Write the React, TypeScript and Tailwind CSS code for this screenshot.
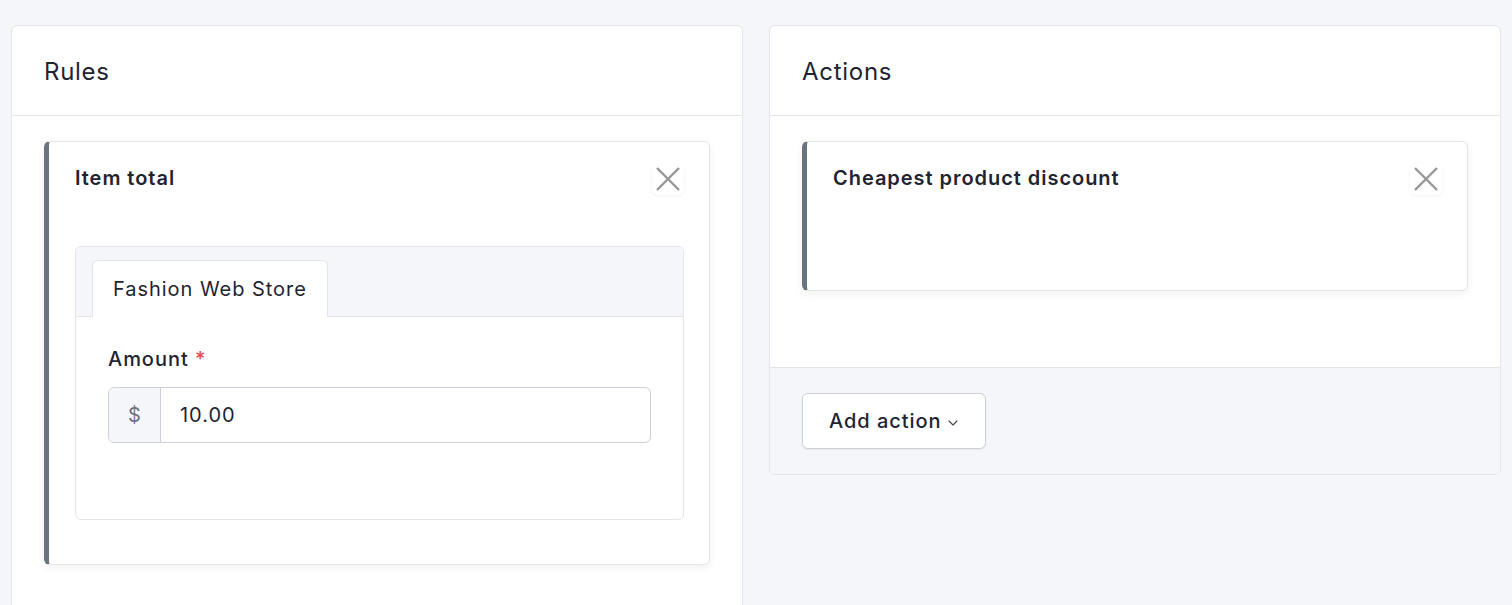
import { ChevronDown } from "lucide-react";

const CloseButton = () => {
  return (
    <button className="flex items-center justify-center size-[32px] rounded-md shadow-[0_1px_3px_rgba(0,0,0,0.06)] bg-white">
      <svg width="24" height="24" viewBox="0 0 24 24" fill="none" stroke="#979797" strokeWidth="2.4">
        <line x1="1" y1="1" x2="23" y2="23" />
        <line x1="23" y1="1" x2="1" y2="23" />
      </svg>
    </button>
  );
};

const App = () => {
  return (
    <div className="min-h-screen bg-[#f5f6fa] px-[11px] pt-[25px] flex gap-[26px] items-start font-['Inter',sans-serif] text-[#1f2431] tracking-[0.06em]">
      {/* Rules card */}
      <div className="w-[732px] h-[600px] bg-white border border-[#e3e5ea] rounded-md">
        <div className="h-[90px] px-8 flex items-center border-b border-[#e3e5ea]">
          <h2 className="text-[24px] leading-none pt-[2px] tracking-[0.03em]">Rules</h2>
        </div>
        <div className="px-8 pt-[25px]">
          <div className="bg-white border border-[#e3e5ea] border-l-[5px] border-l-[#6b7280] rounded-md shadow-[0_3px_8px_rgba(0,0,0,0.06)] pl-[26px] pr-[25px] pt-[21px] pb-[44px]">
            <div className="flex items-center justify-between">
              <span className="text-[20px] font-semibold -mt-[2px]">Item total</span>
              <CloseButton />
            </div>
            <div className="mt-[51px] border border-[#e3e5ea] rounded-md">
              <div className="bg-[#f5f6fa] rounded-t-md px-4 pt-[13px] border-b border-[#e3e5ea] flex">
                <div className="bg-white border border-b-0 border-[#e3e5ea] rounded-t-md px-5 h-[57px] -mb-px flex items-center text-[20px]">
                  Fashion Web Store
                </div>
              </div>
              <div className="px-8 pt-[27px] pb-[76px]">
                <label className="text-[20px] font-medium">
                  Amount <span className="text-[#e5484d]">*</span>
                </label>
                <div className="mt-[13px] flex h-[56px] border border-[#ccd0d8] rounded-md overflow-hidden">
                  <div className="w-[52px] bg-[#f5f6fa] border-r border-[#ccd0d8] flex items-center justify-center text-[20px] text-[#6b7280] tracking-normal">
                    $
                  </div>
                  <div className="flex-1 flex items-center pl-[19px] text-[20px]">10.00</div>
                </div>
              </div>
            </div>
          </div>
        </div>
      </div>

      {/* Actions card */}
      <div className="w-[732px] bg-white border border-[#e3e5ea] rounded-md overflow-hidden">
        <div className="h-[90px] px-8 flex items-center border-b border-[#e3e5ea]">
          <h2 className="text-[24px] leading-none pt-[2px] tracking-[0.03em]">Actions</h2>
        </div>
        <div className="px-8 pt-[25px] pb-[76px]">
          <div className="h-[150px] bg-white border border-[#e3e5ea] border-l-[5px] border-l-[#6b7280] rounded-md shadow-[0_3px_8px_rgba(0,0,0,0.06)] pl-[26px] pr-[25px] pt-[21px]">
            <div className="flex items-center justify-between">
              <span className="text-[20px] font-semibold -mt-[2px]">Cheapest product discount</span>
              <CloseButton />
            </div>
          </div>
        </div>
        <div className="bg-[#f5f6fa] border-t border-[#e3e5ea] px-8 pt-[25px] pb-[25px]">
          <button className="h-[56px] pl-[26px] pr-[24px] bg-white border border-[#ccd0d8] rounded-md shadow-[0_1px_2px_rgba(0,0,0,0.06)] flex items-center gap-[3px] text-[20px] font-medium">
            Add action
            <ChevronDown size={16} strokeWidth={1.6} className="text-[#444] mt-[3px]" />
          </button>
        </div>
      </div>
    </div>
  );
};

export default App;
